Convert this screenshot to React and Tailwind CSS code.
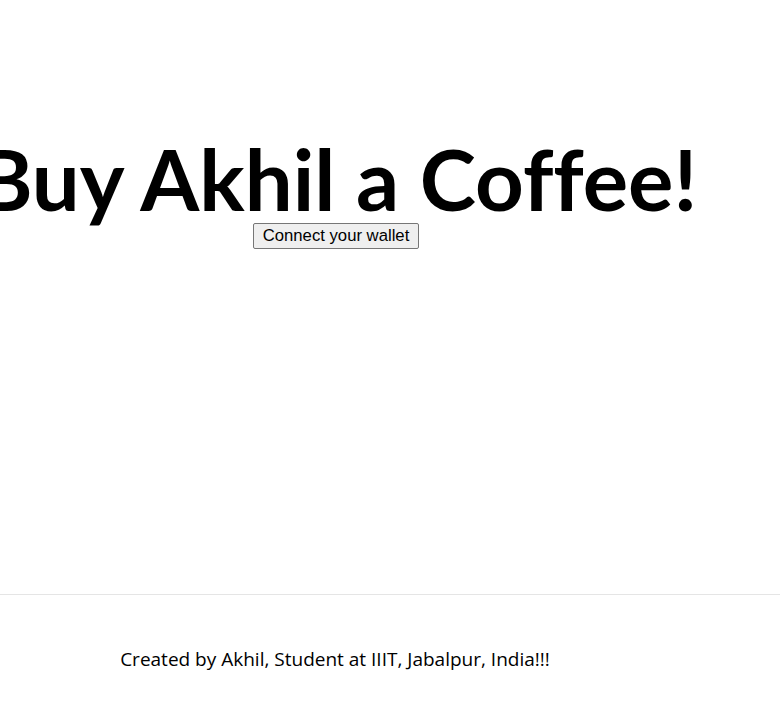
import React from "react";

export default function App() {
  return (
    <div className="min-h-[702px] bg-white text-black font-['Open_Sans',sans-serif]">
      <main className="w-[672px] h-[594px] flex flex-col items-center pt-[136px]">
        <h1 className="ml-[2px] whitespace-nowrap text-[85px] leading-none font-bold font-['Lato',sans-serif] [font-variant-ligatures:none]">
          Buy Akhil a Coffee!
        </h1>
        <button className="mt-[2px] px-[9px] py-[3px] border border-[#767676] rounded-[2px] bg-[#efefef] text-[16.7px] leading-[18px] font-['Liberation_Sans',Arial,sans-serif]">
          Connect your wallet
        </button>
      </main>
      <footer className="border-t border-[#e5e5e5] w-full">
        <div className="w-[670px] flex justify-center pt-[51px]">
          <p className="text-[19px] leading-[26px]">
            Created by Akhil, Student at IIIT, Jabalpur, India!!!
          </p>
        </div>
      </footer>
    </div>
  );
}
